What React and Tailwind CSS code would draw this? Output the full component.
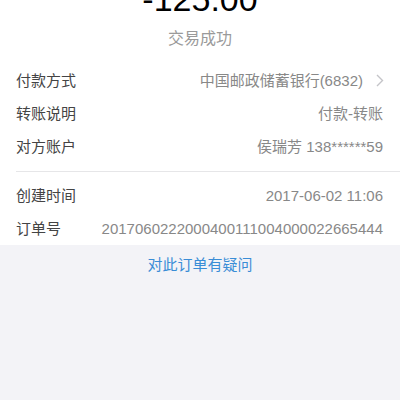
import React from "react";

const font = { fontFamily: '"Liberation Sans", "Noto Sans CJK SC", sans-serif' };

const group1 = [
  { label: "付款方式", value: "中国邮政储蓄银行(6832)", arrow: true },
  { label: "转账说明", value: "付款-转账" },
  { label: "对方账户", value: "侯瑞芳 138******59" },
];

const group2 = [
  { label: "创建时间", value: "2017-06-02 11:06" },
  { label: "订单号", value: "2017060222000400111004000022665444" },
];

function Row({ label, value, arrow }) {
  return (
    <div className="flex h-[33px] items-center justify-between pl-4 pr-[17px] text-[15px] leading-none">
      <span className="text-[#444]">{label}</span>
      <span className="flex items-center text-[#888]">
        {value}
        {arrow && (
          <svg width="8" height="13" viewBox="0 0 8 13" className="ml-[13px] mr-[-1px]">
            <path d="M1 1 L6.5 6.5 L1 12" fill="none" stroke="#c4c4c8" strokeWidth="1.4" />
          </svg>
        )}
      </span>
    </div>
  );
}

export default function App() {
  return (
    <div className="min-h-screen overflow-hidden bg-[#f3f3f7]" style={font}>
      <section className="bg-white">
        {/* 金额 */}
        <div className="mt-[-18px] text-center text-[34px] leading-none text-black font-light">
          -125.00
        </div>
        <div className="mt-[15px] h-[16px] text-center text-[16px] leading-none text-[#9a9a9a]">
          交易成功
        </div>
        <div className="pt-[17px] pb-[8px]">
          {group1.map((r) => (
            <Row key={r.label} {...r} />
          ))}
        </div>
        <div className="ml-4 h-px bg-[#e6e6e8]" />
        <div className="pt-[7px]">
          {group2.map((r) => (
            <Row key={r.label} {...r} />
          ))}
        </div>
      </section>
      <div className="flex h-[40px] items-center justify-center text-[15px] text-[#3a8dd6]">
        对此订单有疑问
      </div>
    </div>
  );
}
